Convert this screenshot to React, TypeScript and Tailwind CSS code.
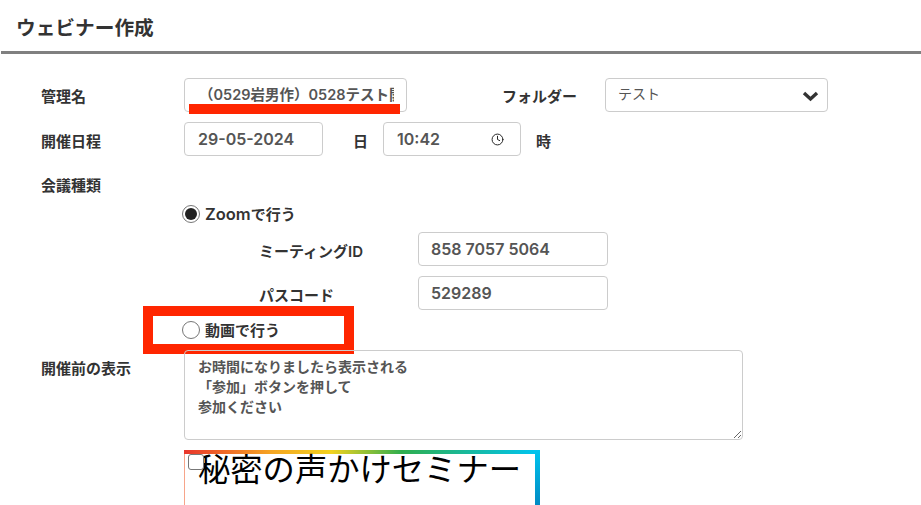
import { Clock } from "lucide-react";

const fieldClass =
    "h-[34px] rounded-[4px] border border-[#cccccc] bg-white text-[#555555] outline-none";

function Radio({ checked }: { checked?: boolean }) {
    return (
        <span className="flex h-[18px] w-[18px] shrink-0 items-center justify-center rounded-full border border-[#777777] bg-white">
            {checked && <span className="h-[12px] w-[12px] rounded-full bg-[#222222]" />}
        </span>
    );
}

export default function App() {
    return (
        <div className="relative h-[505px] w-[921px] overflow-hidden bg-white font-['Inter','Noto_Sans_CJK_JP',sans-serif] text-[15px] font-semibold text-[#333333]">
            <h1 className="ml-[1px] flex h-[54px] items-center border-b-[3px] border-[#808080] pt-[6px] pl-[15px] text-[19.7px] font-bold leading-none">
                ウェビナー作成
            </h1>

            <div className="flex items-start pt-[24px]">
                <div className="w-[184px] shrink-0 pl-[41px] pt-[9px] leading-[20px]">管理名</div>
                <div className="relative">
                    <input
                        readOnly
                        value="（0529岩男作）0528テスト開催"
                        className={`${fieldClass} w-[223px] pb-[3px] pl-[14px] pr-[12px] text-[14.5px] font-semibold`}
                    />
                    <div className="absolute left-[5px] top-[26px] h-[10px] w-[211px] bg-[#ff2600]" />
                </div>
                <div className="w-[98px] shrink-0 pl-[95px] pt-[9px] leading-[20px] whitespace-nowrap">フォルダー</div>
                <div className={`${fieldClass} ml-[100px] flex w-[223px] items-center justify-between pl-[12px] pr-[8px] text-[14px] font-normal`}>
                    <span className="-mt-[3px]">テスト</span>
                    <svg width="17" height="11" viewBox="0 0 17 11" className="mt-[2px]">
                        <path d="M2 2 L8.5 8 L15 2" fill="none" stroke="#333333" strokeWidth="3.4" />
                    </svg>
                </div>
            </div>

            <div className="mt-[10px] flex items-start">
                <div className="w-[184px] shrink-0 pl-[41px] pt-[10px] leading-[20px]">開催日程</div>
                <input readOnly value="29-05-2024" className={`${fieldClass} w-[139px] pl-[13px] text-[16px] font-semibold`} />
                <div className="w-[60px] pt-[10px] pl-[30px] leading-[20px]">日</div>
                <div className={`${fieldClass} flex w-[138px] items-center justify-between pl-[13px] pr-[16px] text-[16px] font-semibold`}>
                    <span>10:42</span>
                    <Clock size={13} strokeWidth={1.8} className="text-[#222222]" />
                </div>
                <div className="pl-[15px] pt-[10px] leading-[20px]">時</div>
            </div>

            <div className="mt-[20px] pl-[41px] leading-[20px]">会議種類</div>

            <div className="mt-[8px] flex h-[20px] items-center gap-[5px] pl-[182px]">
                <Radio checked />
                <span className="pt-[1px]"><span className="text-[16.5px]">Zoom</span>で行う</span>
            </div>

            <div className="mt-[8px] flex items-start">
                <div className="w-[418px] shrink-0 pl-[259px] pt-[10px] leading-[20px]">ミーティングID</div>
                <input readOnly value="858 7057 5064" className={`${fieldClass} w-[190px] pl-[12px] text-[16px] font-semibold`} />
            </div>

            <div className="mt-[10px] flex items-start">
                <div className="w-[418px] shrink-0 pl-[259px] pt-[10px] leading-[20px]">パスコード</div>
                <input readOnly value="529289" className={`${fieldClass} w-[190px] pl-[12px] text-[16px] font-semibold`} />
            </div>

            <div className="flex h-[40px] items-center">
                <div className="ml-[143px] flex h-[48px] w-[211px] items-center gap-[5px] border-[10px] border-[#ff2600] pl-[29px]">
                    <Radio />
                    <span className="pt-[2px]">動画で行う</span>
                </div>
            </div>

            <div className="flex items-start">
                <div className="w-[184px] shrink-0 pl-[41px] pt-[9px] leading-[20px]">開催前の表示</div>
                <textarea
                    readOnly
                    value={"お時間になりましたら表示される\n「参加」ボタンを押して\n参加ください"}
                    className="h-[90px] w-[559px] rounded-[4px] border border-[#cccccc] px-[13px] py-[6px] text-[14px] font-bold leading-[20px] text-[#555555] outline-none"
                />
            </div>

            <div className="ml-[184px] mt-[10px] flex h-[80px] w-[356px]">
                <div className="flex-1 bg-[linear-gradient(90deg,#e8352c_0%,#f5a623_25%,#f2d21f_42%,#2fae4e_62%,#00c4ee_100%)] pt-[4px]">
                    <div className="relative h-full border-l border-[#f7a58a] bg-white pl-[13px] text-[32.3px] font-normal leading-[32px] text-black">
                        <span className="absolute left-[3px] top-[0px] h-[16px] w-[16px] rounded-[3px] border border-[#777777] bg-white" />
                        秘密の声かけセミナー
                    </div>
                </div>
                <div className="w-[5px] bg-[linear-gradient(180deg,#00c4ee_0%,#0070b0_100%)]" />
            </div>
        </div>
    );
}
